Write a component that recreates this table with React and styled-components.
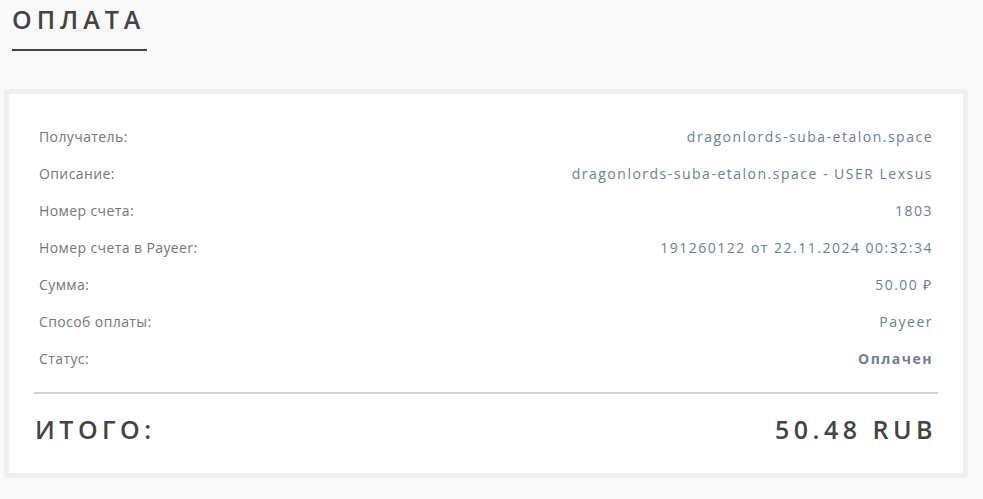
import styled, { createGlobalStyle } from "styled-components";

const rows = [
    { label: "Получатель:", value: "dragonlords-suba-etalon.space" },
    { label: "Описание:", value: "dragonlords-suba-etalon.space - USER Lexsus" },
    { label: "Номер счета:", value: "1803" },
    { label: "Номер счета в Payeer:", value: "191260122 от 22.11.2024 00:32:34" },
    { label: "Сумма:", value: "50.00 ₽" },
    { label: "Способ оплаты:", value: "Payeer" },
    { label: "Статус:", value: "Оплачен", bold: true },
];

export default function App() {
    return (
        <Page>
            <Global />
            <Title>ОПЛАТА</Title>

            <Card>
                <Info>
                    {rows.map((r) => (
                        <Row key={r.label}>
                            <Label>{r.label}</Label>
                            <Value bold={r.bold}>{r.value}</Value>
                        </Row>
                    ))}
                </Info>

                <Total>
                    <span>ИТОГО:</span>
                    <span>50.48 RUB</span>
                </Total>
            </Card>
        </Page>
    );
}

const Global = createGlobalStyle`
    body{
        margin:0;
        background:#f9f9f9;
        font-family:"Open Sans", "Liberation Sans", sans-serif;
    }
`;

const Page = styled.div`
    width:983px;
    height:499px;
    padding-top:2px;
    box-sizing:border-box;
    background:#f9f9f9;
`;

const Title = styled.h1`
    display:inline-block;
    margin:0 0 38px 12px;
    padding:0 0 13px 0;
    width:135px;
    border-bottom:2px solid #444;
    font-size:25px;
    font-weight:600;
    letter-spacing:5px;
    color:#444;
    line-height:34px;
`;

const Card = styled.div`
    margin-left:4px;
    width:964px;
    height:389px;
    box-sizing:border-box;
    border:5px solid #efefef;
    border-radius:4px;
    background:#fff;
    padding:24px 25px 0 25px;
`;

const Info = styled.div`
    display:flex;
    flex-direction:column;
    padding:0 5px;
    border-bottom:2px solid #d4d4d4;
    padding-bottom:15px;
`;

const Row = styled.div`
    display:flex;
    justify-content:space-between;
    align-items:center;
    height:37px;
    font-size:14px;
`;

const Label = styled.span`
    color:#777;
    letter-spacing:0.4px;
`;

const Value = styled.span`
    color:#6c8096;
    letter-spacing:1.5px;
    font-weight:${(p) => (p.bold ? 700 : 400)};
`;

const Total = styled.div`
    display:flex;
    justify-content:space-between;
    align-items:center;
    height:70px;
    padding:0 1px;
    font-size:25px;
    font-weight:600;
    letter-spacing:4.5px;
    color:#444;
`;
